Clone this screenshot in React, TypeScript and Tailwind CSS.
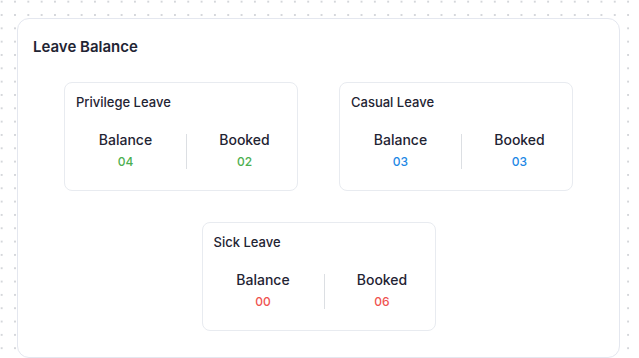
import React from "react";

type Leave = { name: string; balance: string; booked: string; color: string };

function LeaveCard({ name, balance, booked, color }: Leave) {
  return (
    <div className="w-[234px] h-[109px] shrink-0 rounded-lg border border-[#e8ebf0] bg-white pt-[9px]">
      <div className="pl-[11px] text-[13px] leading-[20px] font-medium text-[#1f2433]">{name}</div>
      <div className="mt-[18px] flex">
        <div className="w-[121px] shrink-0 text-center">
          <div className="text-[14px] leading-[20px] font-medium text-[#1f2433]">Balance</div>
          <div className={"mt-[4px] text-[12px] leading-[16px] font-medium " + color}>{balance}</div>
        </div>
        <div className="w-px shrink-0 mt-[4px] mb-[1px] bg-[#dcdfe3]" />
        <div className="w-[115px] shrink-0 text-center">
          <div className="text-[14px] leading-[20px] font-medium text-[#1f2433]">Booked</div>
          <div className={"mt-[4px] text-[12px] leading-[16px] font-medium " + color}>{booked}</div>
        </div>
      </div>
    </div>
  );
}

export default function App() {
  return (
    <div
      className="w-[639px] h-[358px] overflow-hidden bg-white pl-[17px] pt-[18px] bg-[radial-gradient(circle,#d4d6da_1px,transparent_1.3px)] bg-[length:13.33px_13.33px] bg-[position:-5px_-5px]"
      style={{ fontFamily: "Inter, 'Noto Sans', sans-serif" }}
    >
      <div className="w-[603px] h-[340px] rounded-xl border border-[#e4e7ef] bg-white pt-[17px]">
        <div className="pl-[15px] text-[15px] leading-[22px] font-semibold text-[#1f2433]">Leave Balance</div>
        <div className="mt-[24px] flex justify-center gap-[41px]">
          <LeaveCard name="Privilege Leave" balance="04" booked="02" color="text-[#4caf50]" />
          <LeaveCard name="Casual Leave" balance="03" booked="03" color="text-[#1e88e5]" />
        </div>
        <div className="mt-[31px] flex justify-center">
          <LeaveCard name="Sick Leave" balance="00" booked="06" color="text-[#ef5350]" />
        </div>
      </div>
    </div>
  );
}
